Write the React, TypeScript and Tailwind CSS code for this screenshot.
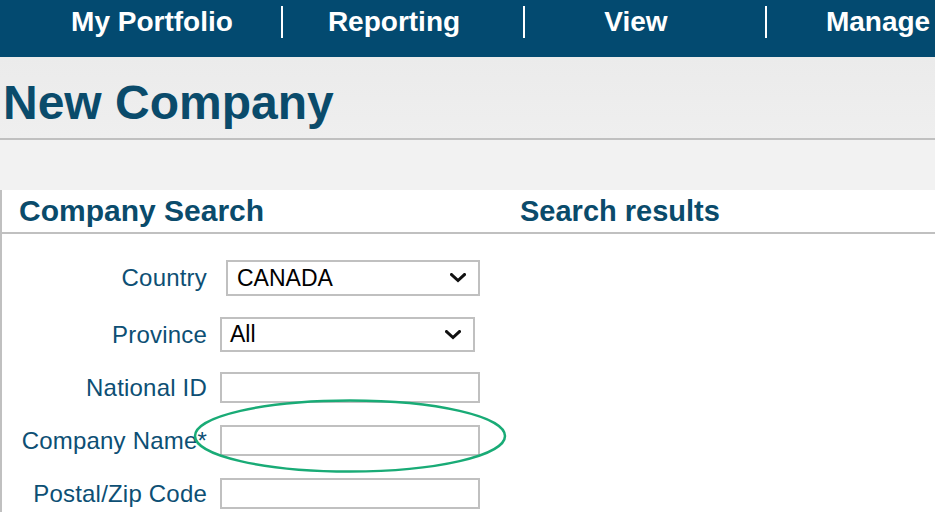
import React from 'react';

const navItems = ["My Portfolio", "Reporting", "View", "Manage"];

const Chevron = () => (
  <svg width="16" height="10" viewBox="0 0 16 10" className="shrink-0">
    <path d="M1.5 1.5 L8 7.5 L14.5 1.5" fill="none" stroke="#111" strokeWidth="3" strokeLinecap="square" />
  </svg>
);

const Label = ({ children }: { children: React.ReactNode }) => (
  <div className="w-[205px] shrink-0 text-right text-[24px] tracking-[0.2px] text-[#0d4f74] leading-none">{children}</div>
);

export default function App() {
  return (
    <div className="w-[935px] h-[512px] overflow-hidden bg-[#f2f2f2] font-['Liberation_Sans',Arial,sans-serif]">
      {/* top nav */}
      <nav className="h-[57px] bg-[#034a70] flex items-start pl-[41px] pt-[6px]">
        {navItems.map((item, i) => (
          <React.Fragment key={item}>
            <div className="w-[240px] shrink-0 text-center pr-[18px] text-white font-bold text-[28px] leading-[32px]">
              {item}
            </div>
            {i < navItems.length - 1 && <div className="w-[2px] h-[32px] bg-white shrink-0" />}
          </React.Fragment>
        ))}
      </nav>

      {/* title */}
      <div className="h-[83px] bg-gradient-to-b from-[#ebebeb] to-[#efefef] border-b-2 border-[#c0c0c0] pl-[3px] pt-[22px]">
        <h1 className="text-[48px] leading-none font-bold text-[#0a4b6b]">New Company</h1>
      </div>

      <div className="h-[50px]" />

      {/* panel */}
      <div className="bg-white border-l-2 border-[#c0c0c0] h-[322px]">
        <div className="h-[44px] flex items-end pb-[6px] border-b-2 border-[#c0c0c0] leading-none font-bold text-[#0a4b6b]">
          <div className="w-[500px] pl-[17px] text-[30px]">Company Search</div>
          <div className="pl-[18px] text-[29px]">Search results</div>
        </div>

        <div className="relative pt-[26px] flex flex-col">
          <div className="flex items-center h-[36px]">
            <Label>Country</Label>
            <div className="ml-[19px] w-[254px] h-[36px] border-2 border-[#c0c0c0] flex items-center justify-between pl-[9px] pr-[12px] text-[23px] text-black">
              <span>CANADA</span>
              <Chevron />
            </div>
          </div>

          <div className="flex items-center h-[35px] mt-[21px]">
            <Label>Province</Label>
            <div className="ml-[13px] w-[255px] h-[35px] border-2 border-[#c0c0c0] flex items-center justify-between pl-[8px] pr-[12px] text-[23px] text-black">
              <span>All</span>
              <Chevron />
            </div>
          </div>

          <div className="flex items-center h-[31px] mt-[20px]">
            <Label>National ID</Label>
            <div className="ml-[13px] w-[260px] h-[31px] border-2 border-[#c0c0c0]" />
          </div>

          <div className="flex items-center h-[31px] mt-[22px]">
            <Label>Company Name*</Label>
            <div className="ml-[13px] w-[260px] h-[31px] border-2 border-[#c0c0c0]" />
          </div>

          <div className="flex items-center h-[31px] mt-[22px]">
            <Label>Postal/Zip Code</Label>
            <div className="ml-[13px] w-[260px] h-[31px] border-2 border-[#c0c0c0]" />
          </div>

          {/* highlight ellipse */}
          <svg className="absolute left-[191px] top-[165px]" width="314" height="76" viewBox="0 0 314 76">
            <ellipse cx="157" cy="37" rx="155" ry="35.5" fill="none" stroke="#19ab76" strokeWidth="2.5" />
          </svg>
        </div>
      </div>
    </div>
  );
}
